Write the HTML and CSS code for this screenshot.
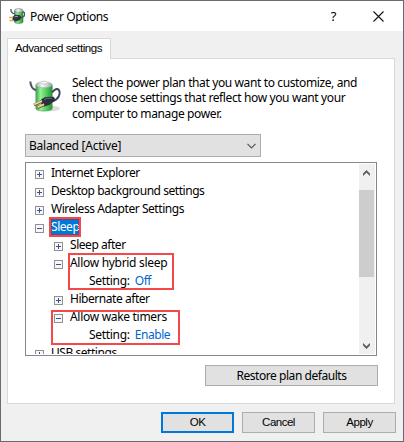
FILE: index.html
```html
<!DOCTYPE html>
<html lang="en">
<head>
  <meta charset="UTF-8">
  <meta name="viewport" content="width=device-width, initial-scale=1.0">
  <title>Power Options</title>
  <link rel="stylesheet" href="styles.css">
</head>
<body>
  <svg width="0" height="0" class="defs">
    <defs>
      <linearGradient id="cell" x1="0" x2="1" y1="0" y2="0">
        <stop offset="0" stop-color="#36a645"/>
        <stop offset=".28" stop-color="#98ee98"/>
        <stop offset=".6" stop-color="#5bd063"/>
        <stop offset="1" stop-color="#239637"/>
      </linearGradient>
      <linearGradient id="metal" x1="0" x2="1" y1="0" y2="0">
        <stop offset="0" stop-color="#a3acab"/>
        <stop offset=".4" stop-color="#f7f9f9"/>
        <stop offset="1" stop-color="#9aa3a2"/>
      </linearGradient>
      <symbol id="battery" viewBox="0 0 32 32">
        <ellipse cx="22" cy="28.500" rx="9" ry="2.800" fill="#b9beb9" opacity=".5"/>
        <path d="M6.800 5v23.500c0 3.500 16.500 3.500 16.500 0V5z" fill="url(#cell)" stroke="#4c9a57" stroke-width=".5"/>
        <ellipse cx="15" cy="4.800" rx="8.300" ry="2.900" fill="url(#metal)" stroke="#9aa5a3" stroke-width=".5"/>
        <ellipse cx="15" cy="2.600" rx="3.600" ry="1.500" fill="#f4f6f6" stroke="#a0a9a8" stroke-width=".5"/>
        <path d="M1.300 1.500c.3 4.500 2 7.500 5.700 8.800" fill="none" stroke="#4c5366" stroke-width="2"/>
        <path d="M23 12.500c2-2.500 3.500-4 5.500-3.500 2.500.8 2.700 4.500 1.200 7.500-1.300 2.500-3.500 4-6.700 5" fill="none" stroke="#3f465f" stroke-width="2"/>
        <path d="M12.500 19.500l3.500-2 8.500-.5 1.500 2.500-5.500 5-5.500 1.800-3-3.300z" fill="#2b2e40" stroke="#171923" stroke-width=".5"/>
        <path d="M15 19.500l3-1 5-.2" fill="none" stroke="#72788b" stroke-width=".8"/>
        <path d="M13 21.300L5 25M15.300 24.500l-6.800 3.300" stroke="#7a5328" stroke-width="2.800"/>
        <path d="M13 21L5.300 24.500M15 24.200l-6.300 3" stroke="#f2d9ab" stroke-width="1.500"/>
      </symbol>
      <symbol id="battery-small" viewBox="0 0 16 16">
        <path d="M5.500 3v11c0 1.800 8.500 1.800 8.500 0V3z" fill="url(#cell)" stroke="#31723b" stroke-width=".6"/>
        <ellipse cx="9.700" cy="2.500" rx="4.200" ry="1.900" fill="url(#metal)" stroke="#79817f" stroke-width=".6"/>
        <path d="M2 1c-.3 2.500.5 4 3.500 5M14 4c2.200 0 2 3 .8 4.500l-3 1.500" fill="none" stroke="#4c5360" stroke-width="1.300"/>
        <path d="M3.500 9l2.500-2.300 4.500.3 2 2-1.500 3-4 1.500-3.500-1.500z" fill="#30333c"/>
        <path d="M5.500 8.800l3.500-.5" stroke="#9a9ea6" stroke-width="1"/>
        <path d="M0 9.500h3.800M.5 12.500h3.800" stroke="#d6ae4c" stroke-width="1.500"/>
      </symbol>
    </defs>
  </svg>

  <div class="window">
    <header class="titlebar">
      <svg class="title-icon"><use href="#battery-small"/></svg>
      <h1 class="title">Power Options</h1>
      <span class="help">?</span>
      <svg class="close" viewBox="0 0 11 11"><path d="M.5.5l10 10M10.500.5l-10 10"/></svg>
    </header>

    <div class="tabs">
      <div class="tab">Advanced settings</div>
    </div>

    <main class="panel">
      <div class="intro">
        <svg class="intro-icon"><use href="#battery"/></svg>
        <p>
          Select the power plan that you want to customize, and<br>
          then choose settings that reflect how you want your<br>
          computer to manage power.
        </p>
      </div>

      <div class="combo">
        <span>Balanced [Active]</span>
        <svg width="9" height="6" viewBox="0 0 9 6"><path d="M.5.8l4 4 4-4"/></svg>
      </div>

      <div class="tree">
        <ul class="rows">
          <li><i class="box plus"></i><span>Internet Explorer</span></li>
          <li><i class="box plus"></i><span>Desktop background settings</span></li>
          <li><i class="box plus"></i><span>Wireless Adapter Settings</span></li>
          <li><i class="box"></i><span class="selected">Sleep</span></li>
          <li class="child"><i class="box plus"></i><span>Sleep after</span></li>
          <li class="child"><i class="box"></i><span class="wide">Allow hybrid sleep</span></li>
          <li class="setting"><span class="wide">Setting:</span><span class="value">Off</span></li>
          <li class="child"><i class="box plus"></i><span>Hibernate after</span></li>
          <li class="child"><i class="box"></i><span class="wide">Allow wake timers</span></li>
          <li class="setting"><span class="wide">Setting:</span><span class="value">Enable</span></li>
          <li><i class="box plus"></i><span>USB settings</span></li>
        </ul>
        <div class="scrollbar">
          <svg class="arrow" viewBox="0 0 7 6"><path d="M0 3.500L3.500 0 7 3.500V6L3.500 2.700 0 6z"/></svg>
          <div class="thumb"></div>
          <svg class="arrow down" viewBox="0 0 7 6"><path d="M0 0l3.500 3.300L7 0v2.500L3.500 6 0 2.500z"/></svg>
        </div>
        <div class="mark mark-sleep"></div>
        <div class="mark mark-hybrid"></div>
        <div class="mark mark-wake"></div>
      </div>

      <button class="btn restore">Restore plan defaults</button>
    </main>

    <footer class="actions">
      <button class="btn ok">OK</button>
      <button class="btn">Cancel</button>
      <button class="btn">Apply</button>
    </footer>
  </div>
</body>
</html>
```
FILE: styles.css
```css
* {
  box-sizing: border-box;
}
body {
  margin: 0;
  font-family: "Noto Sans", "Open Sans", sans-serif;
  font-size: 12px;
  letter-spacing: -0.38px;
  color: #000;
}
.defs {
  position: absolute;
}
.window {
  width: 404px;
  height: 442px;
  background: #f0f0f0;
  border: 1px solid #6c6a6d;
  overflow: hidden;
}
.titlebar {
  display: flex;
  align-items: center;
  height: 30px;
  padding: 0 19px 0 8px;
  background: #fff;
}
.title-icon {
  width: 16px;
  height: 16px;
}
.title {
  flex: 1;
  margin: 0 0 0 5px;
  font-size: 12px;
  font-weight: normal;
}
.help {
  margin-right: 37px;
  font-size: 13px;
}
.close {
  width: 11px;
  height: 11px;
  stroke: #111;
  stroke-width: 1.1;
}
.tabs {
  height: 27px;
  padding: 7px 0 0 6px;
}
.tab {
  position: relative;
  width: 104px;
  height: 21px;
  padding-left: 7px;
  background: #fff;
  border: 1px solid #d9d9d9;
  border-bottom: 0;
  font: 11.5px/19px "Liberation Sans", sans-serif;
  letter-spacing: -0.4px;
  white-space: nowrap;
}
.panel {
  display: flex;
  flex-direction: column;
  width: 388px;
  height: 346px;
  margin-left: 6px;
  padding: 16px 16px 0 17px;
  background: #fff;
  border: 1px solid #d9d9d9;
}
.intro {
  display: flex;
  height: 59px;
}
.intro-icon {
  width: 32px;
  height: 32px;
  margin: 5px 11px 0 4px;
}
.intro p {
  margin: 0;
  line-height: 15.4px;
  white-space: nowrap;
}
.combo {
  display: flex;
  align-items: center;
  justify-content: space-between;
  width: 236px;
  height: 23px;
  padding: 0 4px 0 3px;
  background: #e1e1e1;
  border: 1px solid #adadad;
  letter-spacing: -0.25px;
}
.combo svg {
  fill: none;
  stroke: #555;
  stroke-width: 1.2;
}
.tree {
  position: relative;
  display: flex;
  justify-content: space-between;
  width: 352px;
  height: 194px;
  margin-top: 5px;
  padding: 1px;
  border: 1px solid #828790;
}
.rows {
  flex: 1;
  height: 190px;
  margin: 0;
  padding: 0 0 0 8px;
  overflow: hidden;
  list-style: none;
}
.rows li {
  display: flex;
  align-items: center;
  height: 18px;
  line-height: 16px;
  letter-spacing: -0.45px;
  white-space: nowrap;
}
.rows .child {
  padding-left: 19px;
}
.rows .setting {
  padding-left: 54px;
}
.rows .wide {
  letter-spacing: -0.3px;
}
.box {
  width: 9px;
  height: 9px;
  margin: 3px 7px 0 0;
  border: 1px solid #919191;
  background: linear-gradient(#3c4f9c, #3c4f9c) center / 5px 1px no-repeat, #f7f7f7;
}
.plus {
  background: linear-gradient(#3c4f9c, #3c4f9c) center / 5px 1px no-repeat, linear-gradient(#3c4f9c, #3c4f9c) center / 1px 5px no-repeat, #f7f7f7;
}
.selected {
  width: 30px;
  height: 18px;
  margin-left: -1px;
  padding-left: 1px;
  background: #0078d7;
  color: #fff;
  line-height: 18px;
}
.value {
  width: 45px;
  margin-left: 5px;
  color: #0066cc;
}
.scrollbar {
  display: flex;
  flex-direction: column;
  width: 16px;
  height: 190px;
  background: #f0f0f0;
}
.arrow {
  width: 7px;
  height: 6px;
  margin: 6px 4px 14px;
  fill: #606060;
}
.thumb {
  width: 15px;
  height: 87px;
  background: #cdcdcd;
}
.down {
  margin: auto 4px 5px;
}
.mark {
  position: absolute;
  border: 2px solid #f54848;
}
.mark-sleep {
  left: 23px;
  top: 54px;
  width: 32px;
  height: 20px;
  outline: 1px dotted #a02a50;
  outline-offset: -3px;
}
.mark-hybrid {
  left: 42px;
  top: 90px;
  width: 106px;
  height: 37px;
}
.mark-wake {
  left: 25px;
  top: 147px;
  width: 129px;
  height: 35px;
}
.btn {
  width: 73px;
  height: 21px;
  padding: 0;
  background: #e1e1e1;
  border: 1px solid #adadad;
  font: 11.5px/17px "Liberation Sans", sans-serif;
  letter-spacing: -0.5px;
  color: #000;
}
.restore {
  align-self: flex-end;
  width: 173px;
  margin-top: 9px;
  font: 12px/17px "Noto Sans", "Open Sans", sans-serif;
  letter-spacing: -0.45px;
}
.ok {
  border: 2px solid #0078d7;
  line-height: 15px;
}
.actions {
  display: flex;
  justify-content: flex-end;
  gap: 8px;
  padding: 8px 7px 0 0;
}
```
